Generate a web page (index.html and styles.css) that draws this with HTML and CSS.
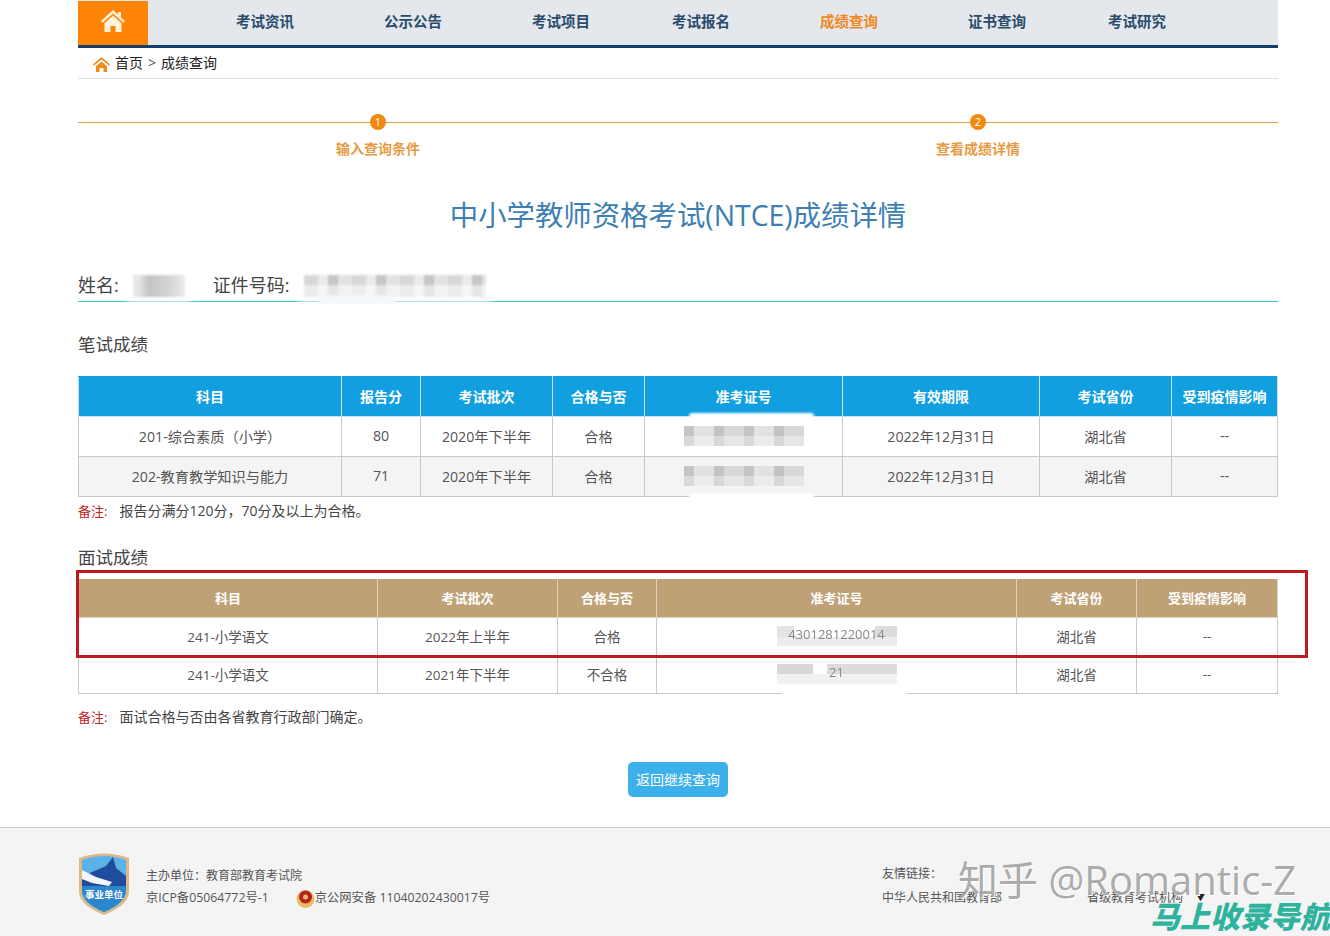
FILE: index.html
```html
<!DOCTYPE html>
<html lang="zh-CN">
<head>
<meta charset="utf-8">
<title>中小学教师资格考试(NTCE)成绩详情</title>
<link rel="stylesheet" href="styles.css">
</head>
<body>
<div class="page">
  <div class="wrap">
    <nav class="nav">
      <a class="home"><svg width="26" height="24" viewBox="0 0 26 24"><path d="M13 1 1 12l1.600 1.800L13 4.400l10.400 9.400L25 12l-4-3.600V3h-3v2.700z" fill="#fff3dc"/><path d="M4.500 14.200 13 6.600l8.500 7.600V23H15.500v-6h-5v6H4.500z" fill="#fff3dc"/></svg></a>
      <a class="nav-item first">考试资讯</a>
      <a class="nav-item">公示公告</a>
      <a class="nav-item">考试项目</a>
      <a class="nav-item narrow">考试报名</a>
      <a class="nav-item active">成绩查询</a>
      <a class="nav-item">证书查询</a>
      <a class="nav-item narrow">考试研究</a>
    </nav>
    <div class="crumb">
      <svg class="crumb-icon" width="17" height="15" viewBox="0 0 17 15"><path d="M8.500 0 0 7.500l1.200 1.100L8.500 2.400l7.300 6.200L17 7.500z" fill="#f08a1d"/><path d="M3 9.200 8.500 4.600 14 9.200V15h-3.500v-4h-4v4H3z" fill="#f08a1d"/></svg>
      <span>首页</span><span class="sep">&gt;</span><span>成绩查询</span>
    </div>
    <div class="steps">
      <div class="step"><div class="dot-row"><span class="dot">1</span></div><div class="step-label">输入查询条件</div></div>
      <div class="step"><div class="dot-row"><span class="dot">2</span></div><div class="step-label">查看成绩详情</div></div>
    </div>
    <h1 class="title">中小学教师资格考试(NTCE)成绩详情</h1>
    <div class="person">
      <span>姓名:</span><span class="smudge smudge-name"></span>
      <span class="id-label">证件号码:</span><span class="smudge smudge-id"></span>
    </div>
    <h2 class="sec sec-written">笔试成绩</h2>
    <table class="grid written">
      <colgroup><col class="w1"><col class="w2"><col class="w3"><col class="w4"><col class="w5"><col class="w6"><col class="w7"><col class="w8"></colgroup>
      <thead><tr><th>科目</th><th>报告分</th><th>考试批次</th><th>合格与否</th><th>准考证号</th><th>有效期限</th><th>考试省份</th><th>受到疫情影响</th></tr></thead>
      <tbody>
        <tr><td>201-综合素质（小学）</td><td>80</td><td>2020年下半年</td><td>合格</td><td><span class="mosaic top-blot"></span></td><td>2022年12月31日</td><td>湖北省</td><td>--</td></tr>
        <tr class="alt"><td>202-教育教学知识与能力</td><td>71</td><td>2020年下半年</td><td>合格</td><td><span class="mosaic bottom-blot"></span></td><td>2022年12月31日</td><td>湖北省</td><td>--</td></tr>
      </tbody>
    </table>
    <p class="note note-written"><b>备注:</b>报告分满分120分，70分及以上为合格。</p>
    <h2 class="sec sec-interview">面试成绩</h2>
    <table class="grid interview">
      <colgroup><col class="i1"><col class="i2"><col class="i3"><col class="i4"><col class="i5"><col class="i6"></colgroup>
      <thead><tr><th>科目</th><th>考试批次</th><th>合格与否</th><th>准考证号</th><th>考试省份</th><th>受到疫情影响</th></tr></thead>
      <tbody>
        <tr><td>241-小学语文</td><td>2022年上半年</td><td>合格</td><td><span class="mosaic light">4301281220014</span></td><td>湖北省</td><td>--</td></tr>
        <tr><td>241-小学语文</td><td>2021年下半年</td><td>不合格</td><td><span class="mosaic light gap bottom-blot">21</span></td><td>湖北省</td><td>--</td></tr>
      </tbody>
    </table>
    <p class="note note-interview"><b>备注:</b>面试合格与否由各省教育行政部门确定。</p>
    <div class="actions"><a class="btn">返回继续查询</a></div>
  </div>
  <footer class="footer">
    <div class="footer-in">
      <svg class="badge" width="52" height="63" viewBox="0 0 52 63">
        <path d="M1 6Q26-3 51 6V39Q51 53 26 63 1 53 1 39z" fill="#d9b98c"/>
        <path d="M4 8Q26 0 48 8V38Q48 51 26 60 4 51 4 38z" fill="#5bb2e8"/>
        <path d="M4 26 14 20 28 14 35 5 38 16 48 24V34H4z" fill="#1f4c9b"/>
        <path d="M4 18 18 25 34 30 31 34 14 31 4 27z" fill="#f3f6fa"/>
        <path d="M4 34H48V38Q48 51 26 60 4 51 4 38z" fill="#2a86cd"/>
        <text x="26" y="46" class="badge-text">事业单位</text>
      </svg>
      <div class="org">
        <div>主办单位：教育部教育考试院</div>
        <div class="org-line"><span>京ICP备05064772号-1</span>
          <svg class="police" width="19" height="21" viewBox="0 0 19 21"><circle cx="9.500" cy="11" r="9" fill="#e6bb62"/><circle cx="9.500" cy="9" r="6.500" fill="#b3231f"/><circle cx="9.500" cy="9" r="2.500" fill="#e6bb62"/></svg>
          <span>京公网安备 11040202430017号</span></div>
      </div>
      <div class="links">
        <div>友情链接：</div>
        <div class="links-row"><span>中华人民共和国教育部</span><span class="prov">省级教育考试机构</span><span class="caret">▼</span></div>
      </div>
    </div>
  </footer>
  <div class="annot"></div>
  <div class="mark-zh">知乎 @Romantic-Z</div>
  <div class="mark-green">马上收录导航</div>
</div>
</body>
</html>
```
FILE: styles.css
```css
* { box-sizing: border-box; }
html, body { margin: 0; padding: 0; }
body {
  font-family: "Open Sans", "Noto Sans CJK SC", sans-serif;
  color: #444;
  background: #fff;
}
.page { position: relative; width: 1330px; height: 936px; overflow: hidden; }
.wrap { width: 1200px; margin-left: 78px; }

.nav {
  display: flex; align-items: flex-start; height: 48px;
  background: #e4e7eb; border-bottom: 3px solid #123f6d;
  font-size: 14.500px; font-weight: 700; color: #2b4c6b; white-space: nowrap;
  padding-top: 1px;
}
.home {
  width: 70px; height: 44px; background: #ff8405;
  display: flex; justify-content: center; align-items: flex-start; padding-top: 8px;
}
.nav-item { margin-left: 90px; width: 58px; line-height: 42px; }
.nav-item.first { margin-left: 88px; }
.nav-item.narrow { margin-left: 82px; }
.nav-item.active { color: #f0891f; }

.crumb {
  display: flex; align-items: center; height: 31px;
  padding: 0 0 2px 15px; font-size: 14px; color: #222;
  border-bottom: 1px solid #dedede;
}
.crumb-icon { margin: 4px 5px 0 0; }
.sep { margin: 0 5px; color: #555; }

.steps { display: flex; padding-top: 35px; }
.step { width: 600px; }
.dot-row {
  height: 16px; display: flex; justify-content: center;
  background: linear-gradient(#e0a050, #e0a050) center / 100% 1px no-repeat;
}
.dot {
  width: 16px; height: 16px; border-radius: 50%; background: #f28a12;
  color: #fff; font-size: 11px; line-height: 16px; text-align: center;
}
.step-label {
  margin-top: 9px; text-align: center; font-size: 14px; font-weight: 700;
  color: #e89b45; line-height: 20px;
}

.title {
  margin: 34px 0 0; text-align: center; font-size: 28.400px; font-weight: 400;
  color: #3d7fb3; line-height: 44px;
}
.person {
  display: flex; align-items: center; height: 36px; margin-top: 29px;
  font-size: 18px; color: #444;
  border-bottom: 1px solid #3cc3d3;
  white-space: nowrap;
}
.id-label { margin-left: 28px; }
.smudge {
  display: block; height: 22px; margin-top: 5px;
  background-color: #e4e2e3;
  box-shadow: 0 0 5px 5px #fff;
  position: relative;
  filter: blur(1px);
}
.smudge-name { width: 52px; margin-left: 14px; background-image: linear-gradient(90deg, #e8e8e8 10%, #c5c3c5 30%, #d5d3d5 70%, #ececec); }
.smudge-id {
  width: 182px; margin-left: 15px;
  background-image:
    linear-gradient(rgba(255,255,255,0) 45%, rgba(255,255,255,.55) 45%),
    repeating-linear-gradient(90deg, #d8d6d7 0 14px, #ecebeb 14px 24px, #c6c4c5 24px 34px, #e4e3e3 34px 48px);
}
.smudge-id::after {
  content: ""; position: absolute; left: 15px; top: 20px; width: 76px; height: 9px;
  background: #f1f7fa;
}

.sec { margin: 0; font-size: 17.500px; font-weight: 400; color: #444; line-height: 28px; }
.sec-written { margin-top: 28px; }
.sec-interview { margin-top: 22px; }

.grid {
  width: 1199px; border-collapse: collapse; table-layout: fixed;
  font-size: 14.200px; color: #555;
}
.grid th, .grid td { border: 1px solid #c8c8c8; text-align: center; padding: 0 0 2px; }
.grid th { color: #fff; font-weight: 700; font-size: 14px; }
.written { margin-top: 18px; }
.written th { background: #119fe0; height: 40px; border-color: #119fe0; border-right-color: #c8dfea; border-left-color: #c8dfea; border-bottom-color: #c8dfea; }
.written td { height: 40px; }
.alt td { background: #f4f4f4; }
.interview { margin-top: 8px; }
.interview th { background: #bfa176; height: 38px; font-size: 13px; border-color: #bfa176; border-right-color: #dfd3c0; border-left-color: #dfd3c0; border-bottom-color: #dfd3c0; }
.interview td { height: 38px; font-size: 13.500px; }

.w1 { width: 263px; } .w2 { width: 79px; } .w3 { width: 132px; } .w4 { width: 92px; }
.w5 { width: 198px; } .w6 { width: 197px; } .w7 { width: 132px; } .w8 { width: 106px; }
.i1 { width: 299px; } .i2 { width: 180px; } .i3 { width: 99px; } .i4 { width: 360px; }
.i5 { width: 120px; } .i6 { width: 141px; }

.mosaic {
  position: relative; display: inline-block; width: 120px; height: 20px; vertical-align: middle;
  overflow: visible;
  background-image:
    linear-gradient(rgba(255,255,255,0) 50%, rgba(255,255,255,.35) 50%),
    repeating-linear-gradient(90deg, #c6c5c6 0 10px, #e2e2e2 10px 30px, #c4c3c4 30px 40px, #d8d8d8 40px 60px);
  filter: blur(.7px);
}
.top-blot::before, .bottom-blot::before {
  content: ""; position: absolute; left: 5px; width: 125px; height: 6px;
  background: #fff; border-radius: 3px; filter: blur(1px);
}
.top-blot::before { top: -13px; }
.bottom-blot::before { bottom: -13px; }
.mosaic.light {
  color: #888; font-size: 13px; line-height: 16px; text-align: center;
  background-image: linear-gradient(90deg, #e4e4e4 0 14%, #fff 14% 82%, #dcdcdc 82%);
  box-shadow: inset 0 -9px 0 #ededed;
  filter: blur(.4px);
}
.mosaic.gap {
  background-image: linear-gradient(90deg, #d8d8d8 0 30%, #fff 30% 42%, #dcdcdc 42% 100%);
  box-shadow: inset 0 -10px 0 #f1f1f1;
}

.note { margin: 0; font-size: 14px; color: #444; line-height: 20px; }
.note b { color: #c0221c; font-weight: 400; font-size: 13px; margin-right: 12px; }
.note-written { margin-top: 4px; }
.note-interview { margin-top: 13px; }

.actions { display: flex; justify-content: center; margin-top: 35px; }
.btn {
  width: 100px; height: 35px; border-radius: 5px; background: #3cb0ea;
  color: #fff; font-size: 14px; line-height: 35px; text-align: center;
}

.footer {
  margin-top: 30px; height: 110px;
  background: #f4f4f5; border-top: 1px solid #cfcfcf;
}
.footer-in {
  position: relative; display: flex; padding: 24px 0 0 78px;
  font-size: 12px; color: #555; line-height: 22px;
}
.badge { flex: none; }
.badge-text { font-size: 9.500px; font-weight: 700; fill: #fff; text-anchor: middle; }
.org { flex: none; width: 752px; margin: 13px 0 0; padding-left: 16px; }
.org-line { display: flex; align-items: center; font-size: 12.300px; }
.police { margin: 0 0 0 27px; }
.links { margin: 11px 0 0; }
.links-row { display: flex; margin-top: 2px; }
.prov { margin-left: 85px; }
.caret { margin-left: 13px; color: #222; font-size: 9px; }

.annot {
  position: absolute; left: 76px; top: 570px; width: 1232px; height: 88px;
  border: 3px solid #bf1a22;
}
.mark-zh {
  position: absolute; left: 958px; top: 855px;
  font: 400 40px/50px "Open Sans", "Noto Sans CJK SC", sans-serif;
  color: rgba(150,150,150,.8); text-shadow: 1px 1px 0 #fff; white-space: nowrap;
}
.mark-green {
  position: absolute; left: 1150px; top: 896px;
  font: italic 900 30px/38px "Noto Sans CJK SC", sans-serif;
  color: #2fb39c; white-space: nowrap;
}
```
